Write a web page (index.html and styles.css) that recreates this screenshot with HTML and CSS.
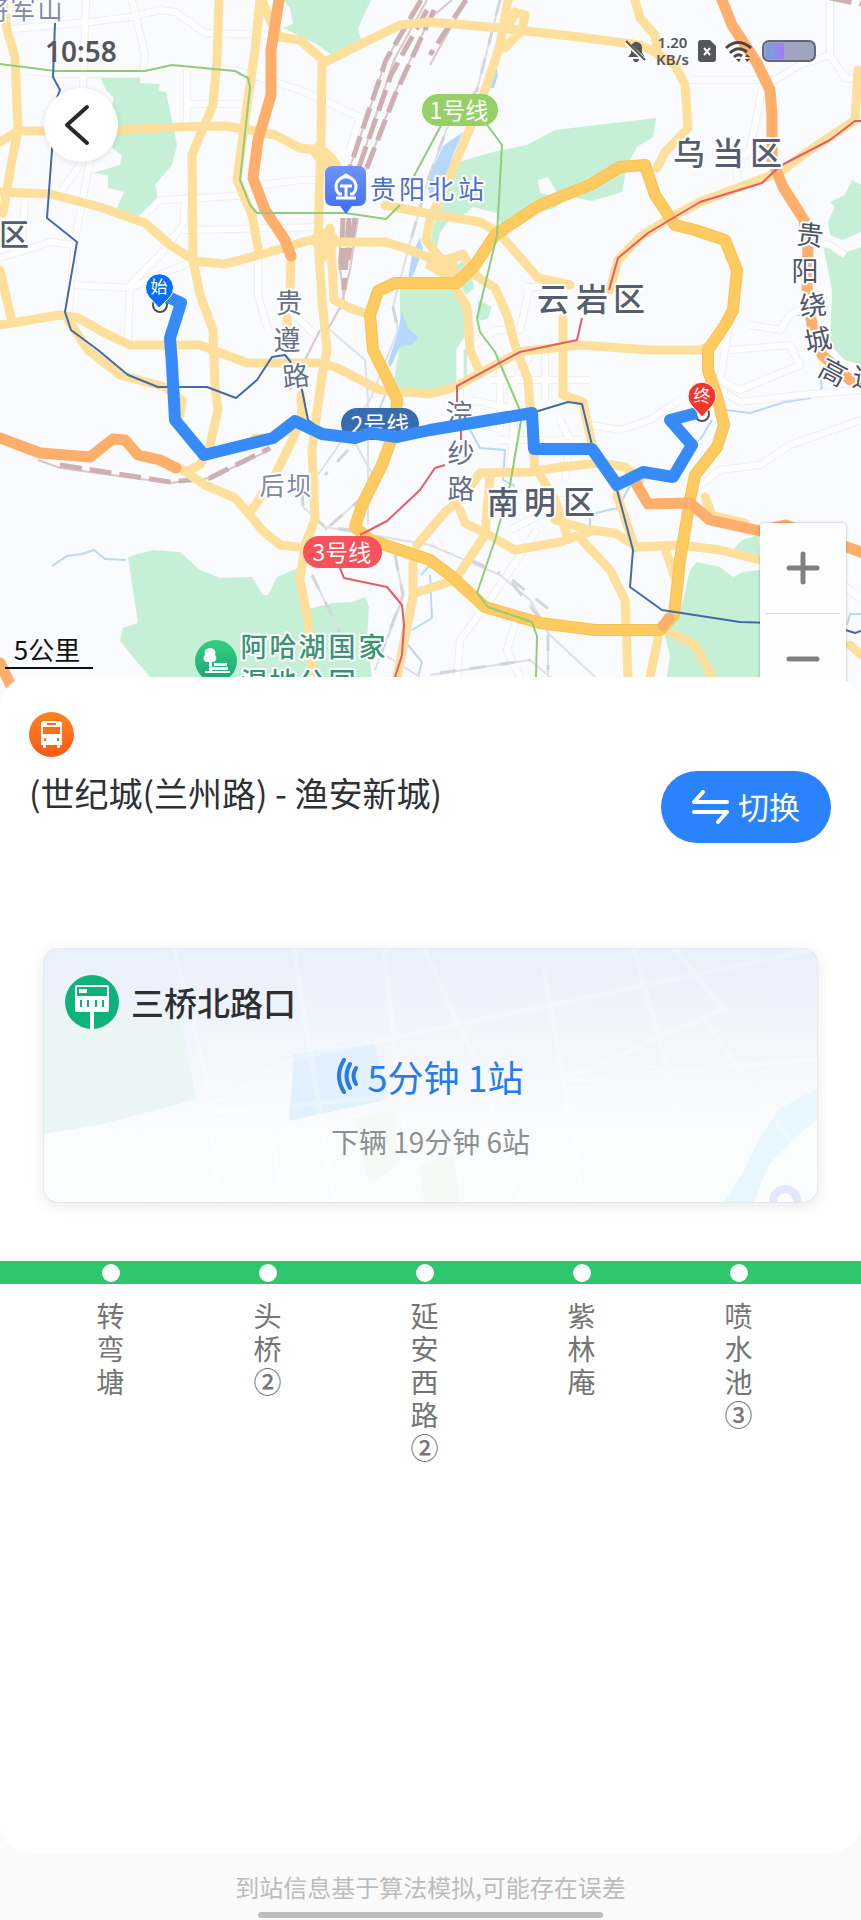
FILE: index.html
```html
<!DOCTYPE html>
<html lang="zh-CN">
<head>
<meta charset="utf-8">
<meta name="viewport" content="width=device-width, initial-scale=1">
<title>公交线路</title>
<link rel="stylesheet" href="styles.css">
</head>
<body>
<section class="map" aria-label="线路地图">
  <svg class="map-canvas" viewBox="0 0 861 700" preserveAspectRatio="xMidYMin slice">
    <defs>
      <linearGradient id="stationFill" x1="0" y1="0" x2="0" y2="1"><stop offset="0" stop-color="#6f93fb"/><stop offset="1" stop-color="#3d6df0"/></linearGradient>
      <linearGradient id="parkFill" x1="0" y1="0" x2="0" y2="1"><stop offset="0" stop-color="#35d07f"/><stop offset="1" stop-color="#17a676"/></linearGradient>
    </defs>

    <g class="park">
      <path d="M283 0H371L358 28 361 40 347 52 333 56 318 45 300 36 283 28 293 24 290 8Z"/>
      <path d="M100 77H140V83L160 84 158 91 166 92 174 130 177 145 172 165 155 185 158 199 145 215 135 217 117 208 124 192 108 188V175L93 173 120 165 122 155 112 148 118 130 110 110 114 98 106 90Z"/>
      <path d="M458 162L493 152 527 145 555 130 656 118 653 137 637 147 627 165 622 192 592 201 570 197 555 208 530 215 500 224 497 213 473 207 466 213 447 223 440 233 436 250 431 240 434 224Z"/>
      <path d="M400 288L455 285 467 310V375L457 390 430 393 405 393 393 385 400 345Z"/>
      <path d="M451 268L462 262 472 275 474 288 466 295ZM478 300L492 307 488 318 478 322Z"/>
      <path d="M861 185L852 180 845 195 830 202 835 207 828 222 830 235 842 240 861 232Z"/>
      <path d="M823 245L847 252 861 247V365L845 360 830 345 832 290Z"/>
      <path d="M128 557L152 550 180 552 200 570 220 578 252 577 263 595 268 595 277 577 300 567 303 610 333 603 353 602 365 597 369 607 367 640 372 677H150L127 650 120 640 123 628 138 623 133 590Z"/>
      <path d="M758 535L742 540 730 553 760 564ZM697 562L720 567 733 577 743 572 760 570V677H667L670 655 665 637 680 613 687 583 690 570Z"/>
    </g>
    <path d="M538 180L548 177 560 198 540 193Z" fill="#fafbff"/>
    <path class="lake" d="M443 146L463 132 453 155 447 177 430 197 427 182ZM495 60L498 75 494 88 490 88ZM420 237L423 250 414 273 407 285 412 255ZM402 312L408 328 418 337 413 344 400 347 390 368 388 362 397 335Z"/>
    <path class="river" d="M52 566L67 556 82 554 94 550 105 559 126 560M820 243L847 252M725 410L750 413 785 402 810 398 822 388 820 375M712 420L700 440M470 430L480 448 505 450 503 480 515 486M596 513L618 508 632 482M590 528V518M385 395L375 420M408 645L422 662 418 677M388 637L402 600M421 575L430 565M430 575L432 618 412 630M847 625L850 614H861M788 315H805"/>

    <g class="lane-edge">
      <path id="lanes" d="M0 30L90 22 130 17 160 10 175 12 205 33 270 35M86 0L83 88M132 0L145 55 143 70M20 70L60 74H143M187 70V125M187 104H242M235 70L300 90 360 117 350 150M90 160L75 240 68 320M62 190L80 165M0 258L50 242 75 245M25 200L22 240M140 220L160 200 255 195M185 200L183 225 160 255 130 285 128 340M75 285L130 288 195 260M183 230L320 227M262 185L300 180H318M258 250V295L268 330M285 305L320 340M690 80L775 80 800 65 830 55 830 0M830 55L845 78 861 80M762 90L750 150 735 165 738 180M530 285L520 330 495 330 475 345M525 287H545M480 320L460 350 460 400M590 425L620 430 650 420 680 400M730 320L720 380 740 390 800 365 790 345 730 350M720 390L740 402 800 395 861 390M861 420L790 445 760 465 720 470 700 485M750 325L780 330 790 315 800 310M500 350V430M530 355L510 390 515 440M545 350V400M490 380H590M500 440H580M515 415L510 470M470 400L520 410M560 420L570 440 565 480M590 490L510 530M590 500L540 500M537 530L490 600 460 640 457 677M520 608L507 650 520 677M435 540L450 565M838 580L861 600M800 240L830 245 845 255"/>
    </g>
    <use href="#lanes" class="lane-fill"/>

    <g class="rail">
      <path class="rail-bed" d="M500 0L477 90 447 128 428 180 410 243 400 280 393 307 398 330 370 400M318 475L370 400M330 330L365 360 368 400 368 525M355 443L373 475M365 495L325 530M302 490L303 507 325 527 430 545M395 555L403 595 375 670M312 575L340 632M385 655L420 677M430 545L500 575 530 600 548 630M530 605L550 635 595 677M548 630V677M430 675L530 660 550 677"/>
      <path class="rail-dash" d="M348 450L325 475M365 495L325 530M302 490L303 507 325 527 350 530M395 555L403 595 375 670M312 575L340 632M470 560L500 573M512 580L550 610M512 583L545 625M548 635V670M440 673L530 660M500 0L477 90 447 128 428 180 410 243M393 307L398 330"/>
      <path class="train-bed" d="M421 0L386 60 349 170M427 0L394 60 358 170M434 10L397 88 366 170M466 0L430 65M452 0L428 20M343 218L339 260 344 300 325 335M358 218L350 270 340 310M320 330L290 390M38 460L60 468 170 483 210 478 270 450"/>
      <path class="train-dash" d="M421 0L386 60 349 170M427 10L391 75 358 170M434 10L395 95 366 170M466 0L430 55M343 218L341 270M349 218L344 290M355 218L348 260M60 465L170 482 210 478 270 448M830 -2L861 4"/>
    </g>

    <g class="street">
      <path d="M3 0L7 30 15 57 18 130 12 160 3 213"/>
      <path d="M0 142L18 131 45 131 120 130 180 127 225 126 250 130 275 135 300 148 320 150"/>
      <path d="M0 192L50 194 100 207 145 223 170 245 195 261 225 264 270 252 310 240 340 242 385 242 405 248 445 264"/>
      <path d="M219 0L217 60 213 105 198 140 192 155 193 260 200 295 213 330 215 385 218 410 210 445 200 465 185 472"/>
      <path d="M260 0L255 50 245 120 237 180 252 215 258 248"/>
      <path d="M262 0L270 20 280 37 300 40 325 62 365 42 400 25 430 22 500 28 570 36 640 45 655 52 675 65 685 85 688 128 665 152 657 168"/>
      <path d="M322 60L321 140 318 240 322 300 327 350 322 375 312 450 315 520 305 545 300 580 308 620 313 677"/>
      <path d="M330 228L334 300 350 308 370 315M291 258L290 288M287 318V325M301 395L302 420 275 475 250 513M302 425L272 438 255 438"/>
      <path d="M180 468L205 485 235 498 250 515 262 530 280 545 308 548"/>
      <path d="M0 325L60 315 78 318 105 333 130 345 200 345 247 363 320 363 335 367 380 390 430 394 455 387 490 368 520 352"/>
      <path d="M68 320L88 350 120 375 165 387 182 400 180 415M0 270L12 322"/>
      <path d="M508 0L500 45 485 90 470 128 448 180 430 220 426 240 440 258M508 28L515 12 525 15 522 30 505 48"/>
      <path d="M385 205L430 214 480 222 498 232 538 278 570 285M563 318V395L583 402 592 445"/>
      <path d="M440 262L463 254 475 275 495 288 507 315 515 345 528 380 535 470"/>
      <path d="M455 287L467 307 470 350 478 368"/>
      <path d="M635 0L640 18 655 35 658 55M858 70L855 120"/>
      <path d="M610 290L618 260 640 237 670 218 700 202 740 187 780 172 810 150 855 120"/>
      <path d="M517 352L580 345 650 350 700 350 712 345"/>
      <path d="M417 545L445 512 460 500 480 473 530 472 560 467 600 463 625 467 640 480M460 510L465 523 485 533 515 550 560 542 595 530M540 475L555 500 567 535M490 475L485 535 455 580 415 593"/>
      <path d="M555 520L590 530 615 533 637 547 680 545 720 550 760 560"/>
      <path d="M413 560V597L397 677M582 540L610 570 625 600 628 677M665 548L675 578M617 495L635 548M665 630L695 645 712 677M658 638L650 677M705 497L712 515 745 523M850 645L861 655"/>
    </g>
    <path class="hub" d="M318 140L335 155 345 170 325 175 308 150ZM308 238L330 225 340 240 325 262ZM430 250L455 258 462 278 445 280 425 268Z"/>

    <path id="ring" class="arterial-edge" d="M457 283H395L378 291 370 315 373 350 388 380 397 400 395 430 382 465 362 505 355 527 370 540 430 560 450 575 485 607 540 623 595 630 660 630 674 615 680 560 690 500 695 475 717 447 724 425 718 400 708 370 708 350 725 325 733 310 737 270 725 240 695 230 675 225 655 195 645 165 620 167 590 185 540 205 495 235 475 265Z"/>
    <path class="arterial" d="M457 283H395L378 291 370 315 373 350 388 380 397 400 395 430 382 465 362 505 355 527 370 540 430 560 450 575 485 607 540 623 595 630 660 630 674 615 680 560 690 500 695 475 717 447 724 425 718 400 708 370 708 350 725 325 733 310 737 270 725 240 695 230 675 225 655 195 645 165 620 167 590 185 540 205 495 235 475 265Z"/>

    <path class="highway" d="M279 0L271 50V95L258 140 253 178 265 210 285 240 291 256M722 0L732 25 757 63 770 90 772 115V160L783 187 804 220 808 245 807 290 812 325 822 355 850 380M0 438L40 453 90 457 113 439 125 440 138 455 160 460 176 468M634 480L648 504 690 503 710 520 760 531 785 525 861 552M0 663L13 690M663 626L669 618"/>

    <path class="metro green" d="M0 64L55 71H145L172 65 235 71 248 78 250 87 240 180 250 205 257 213H345L386 219 400 205M413 178L445 118M485 122L502 145 497 235 477 318 480 332 495 352 522 415 510 485 495 540 477 593 488 607 532 622 537 636 536 677"/>
    <path class="metro blue" d="M55 23L53 77 60 90 52 110V150L47 218 77 242 65 312 71 330 98 350 128 375 158 387H207L236 398 257 380 272 357 285 355 290 361 302 390 308 420 315 425M535 412L568 402 582 404 592 445M617 490L633 550 630 587 662 610 740 622 830 625 855 633 861 631"/>
    <path class="metro red" d="M861 121H855L830 140 780 166 762 183 700 202 648 233 618 258 609 290M582 318L577 340 520 352 457 386V405M461 430V440M445 465L435 468 420 490 387 521 360 535M340 568L344 578 387 587 402 605 404 625 402 655 395 677"/>

    <g class="pill">
      <rect x="422" y="94" width="76" height="32" rx="16" fill="#96d066"/><text x="459" y="119">1号线</text>
      <rect x="303" y="536" width="79" height="32" rx="16" fill="#f7525c"/><text x="342" y="561">3号线</text>
      <rect x="341" y="408" width="78" height="32" rx="16" fill="#386cb1"/><text x="380" y="433">2号线</text>
    </g>

    <g class="road-name">
      <text x="289" y="313">贵</text><text x="287" y="350">遵</text><text x="296" y="386" transform="rotate(-6 296 376)">路</text>
      <text x="459" y="424">浣</text><text x="461" y="463">纱</text><text x="461" y="499">路</text>
    </g>

    <circle cx="160" cy="305" r="7" class="stop-ring"/>
    <circle cx="702" cy="414" r="7" class="stop-ring"/>
    <path class="route" d="M166 296L181 303 170 338 172 365 175 420 204 455 273 438 295 421 322 434 355 438 370 433 397 437 430 430 532 413 534 449H592L617 485 643 472 673 477 692 445 670 420 697 413"/>

    <g class="pin">
      <path d="M159 308L149 297A14 14 0 1 1 170 297Z" fill="#0a6ff5"/><text x="159" y="293">始</text>
      <path d="M702 417L692 406A14 14 0 1 1 712 406Z" fill="#f5352c"/><text x="702" y="402">终</text>
    </g>

    <g class="district">
      <text x="689 728 766" y="165">乌当区</text>
      <text x="553 592 629" y="311">云岩区</text>
      <text x="503 540 579" y="514">南明区</text>
      <text x="14" y="245" class="edge-name">区</text>
    </g>
    <g class="freeway-name">
      <text x="810" y="245" transform="rotate(6 810 235)">贵</text><text x="805" y="281">阳</text><text x="813" y="315" transform="rotate(-6 813 305)">绕</text><text x="818" y="350" transform="rotate(-12 818 340)">城</text><text x="833" y="382" transform="rotate(28 833 372)">高</text><text x="866" y="388" transform="rotate(8 866 378)">速</text>
    </g>
    <g class="place">
      <text x="-4 23 50" y="19">将军山</text>
      <text x="272 299" y="495">后坝</text>
    </g>
    <g class="station-name"><text x="383 412 441 471" y="199">贵阳北站</text></g>
    <path d="M333 166H358Q366 166 366 174V198Q366 206 358 206H352L346 214 340 206H333Q325 206 325 198V174Q325 166 333 166Z" fill="url(#stationFill)"/>
    <path d="M342 194H339A10 10 0 1 1 353 194H350M340 186H352M346 186V197M336 198H356M343 177L346 175 349 177" class="station-mark"/>
    <g class="park-name">
      <text x="254 283 312 342 372" y="657">阿哈湖国家</text>
      <text x="254 283 312 342" y="692">湿地公园</text>
    </g>
    <circle cx="216" cy="661" r="21" fill="url(#parkFill)"/>
    <path d="M210 648A5 5 0 0 1 215 655 4 4 0 0 1 213 662H206A4 4 0 0 1 205 655 5 5 0 0 1 210 648ZM209 660H212V671H209ZM214 663H227V666H214ZM212 667H228V670H212ZM205 671H230V673H205Z" fill="#fff"/>
  </svg>

  <header class="status-bar">
    <time class="clock">10:58</time>
    <div class="status-icons">
      <svg width="22" height="24" viewBox="0 0 22 24" aria-hidden="true"><path d="M3 18L6 14V9A6 6 0 0 1 10 3 2 2 0 0 1 12 3 6 6 0 0 1 17 9V14L20 18ZM8 20H14A3 3 0 0 1 8 20Z" fill="#55565a"/><path d="M0 3L20 21" stroke="#fff8ea" stroke-width="4"/><path d="M1 2L20 21" stroke="#55565a" stroke-width="2"/></svg>
      <span class="net-speed"><b>1.20</b><b>KB/s</b></span>
      <svg width="18" height="22" viewBox="0 0 18 22" aria-hidden="true"><path d="M3 0H12L18 6V19Q18 22 15 22H3Q0 22 0 19V3Q0 0 3 0Z" fill="#55565a"/><path d="M6 8L12 15M12 8L6 15" stroke="#fff" stroke-width="2"/></svg>
      <svg width="28" height="22" viewBox="0 0 28 22" fill="none" stroke="#51463f" stroke-width="3" aria-hidden="true"><path d="M1 8Q13-3 26 8M5 13Q13 5 22 12M9 17Q13 13 17 16"/><path d="M11 19H16L14 22ZM22 14L25 17H20ZM20 19H25L22 22Z" fill="#51463f" stroke="none"/></svg>
      <svg width="54" height="22" viewBox="0 0 54 22" aria-hidden="true"><rect x="1" y="1" width="52" height="20" rx="6" fill="#9fa4bf" stroke="#62667f" stroke-width="2"/><path d="M7 3H12V19H7Q4 19 4 16V6Q4 3 7 3Z" fill="#7c9bdc"/><path d="M12 3H17V19H12Z" fill="#8e8ee6"/><path d="M17 3H22V19H17Z" fill="#a47df0"/></svg>
    </div>
  </header>

  <button class="back" type="button" aria-label="返回"><svg width="26" height="42" viewBox="0 0 26 42" aria-hidden="true"><path d="M23 3L3 21 23 39" fill="none" stroke="#292929" stroke-width="4" stroke-linecap="round" stroke-linejoin="round"/></svg></button>

  <div class="zoom">
    <button type="button" aria-label="放大"><svg width="34" height="34" viewBox="0 0 34 34" aria-hidden="true"><path d="M3 17H31M17 3V31"/></svg></button>
    <button type="button" aria-label="缩小"><svg width="34" height="34" viewBox="0 0 34 34" aria-hidden="true"><path d="M3 17H31"/></svg></button>
  </div>
  <div class="scale">5公里</div>
</section>

<main class="sheet">
  <svg class="bus" width="45" height="45" viewBox="0 0 45 45" aria-hidden="true">
    <defs><linearGradient id="busFill" x1="0" y1="0" x2="0" y2="1"><stop offset="0" stop-color="#ff8420"/><stop offset="1" stop-color="#fb5a18"/></linearGradient></defs>
    <circle cx="22.500" cy="22.500" r="22.500" fill="url(#busFill)"/>
    <path d="M15 9H30Q33 9 33 12V33H31V35Q31 36 30 36H29Q28 36 28 35V33H17V35Q17 36 16 36H15Q14 36 14 35V33H12V12Q12 9 15 9Z" fill="#fff"/>
    <path d="M18 11H27V13H18ZM14 15H31V22H14ZM15 26H17V29H15ZM28 26H30V29H28Z" fill="#fe6d1b"/>
  </svg>
  <div class="route-head">
    <h1>(世纪城(兰州路) - 渔安新城)</h1>
    <button class="switch" type="button">
      <svg width="38" height="34" viewBox="0 0 38 34" fill="none" stroke="#fff" stroke-width="4" stroke-linecap="round" stroke-linejoin="round" aria-hidden="true"><path d="M11 2L2 12H35M2 22H35L26 32"/></svg>
      <span>切换</span>
    </button>
  </div>

  <section class="card">
    <svg class="card-map" viewBox="0 0 773 253" preserveAspectRatio="xMidYMid slice" aria-hidden="true">
      <path d="M0 60H135L152 150 60 175 0 185Z" fill="#ebf6f4"/>
      <path d="M250 105L330 95 345 150 245 172Z" fill="#e2f1fd"/>
      <path d="M310 170L350 160 355 215 325 235ZM375 215L410 205 415 253H380Z" fill="#f5faf6"/>
      <path d="M773 140L735 160 715 190 700 222 680 253H710L725 215 750 190 773 170Z" fill="#e8f6fd"/>
      <path d="M0 230L150 165 250 110 773 0M130 0L160 120 175 253M250 0L290 253M340 0L360 180 420 253M380 0L440 130 475 253M500 20L540 253M590 0L640 180M660 70L773 230M150 165L773 110M60 175L110 253M500 140L680 60 630 0M230 185L235 253" fill="none" stroke="#fff" stroke-opacity=".25" stroke-width="5"/>
      <circle cx="741" cy="252" r="12" fill="none" stroke="#e0e9f9" stroke-width="8"/>
    </svg>
    <div class="station">
      <svg width="54" height="54" viewBox="0 0 54 54" aria-hidden="true"><circle cx="27" cy="27" r="27" fill="#0fb278"/><path d="M12 10H42Q44 10 44 12V35Q44 37 42 37H29V54H25V37H12Q10 37 10 35V12Q10 10 12 10Z" fill="#fff"/><path d="M12 12H42V21H12ZM15 25H17V32H15ZM22 25H24V32H22ZM30 25H32V32H30ZM37 25H39V32H37Z" fill="#0fb278"/><path d="M14 14H22V18H14Z" fill="#fff"/></svg>
      <h2>三桥北路口</h2>
    </div>
    <p class="next-bus"><svg width="22" height="36" viewBox="0 0 22 36" fill="none" stroke="#277af0" stroke-width="4" stroke-linecap="round" aria-hidden="true"><path d="M7 2Q-3 18 7 34M13 6Q6 18 13 30M19 10Q14 18 19 26"/></svg><span>5分钟 1站</span></p>
    <p class="later-bus">下辆 19分钟 6站</p>
  </section>

  <ol class="stops">
    <li><i></i><span>转弯塘</span></li>
    <li><i></i><span>头桥<b>②</b></span></li>
    <li><i></i><span>延安西路<b>②</b></span></li>
    <li><i></i><span>紫林庵</span></li>
    <li><i></i><span>喷水池<b>③</b></span></li>
  </ol>
</main>

<footer class="foot">
  <p>到站信息基于算法模拟,可能存在误差</p>
  <div class="home-bar"></div>
</footer>
</body>
</html>
```
FILE: styles.css
```css
* { box-sizing: border-box; }

body {
  margin: 0;
  min-height: 100vh;
  display: flex;
  flex-direction: column;
  background: #fafafa;
  color: #2f3033;
  font-family: "Noto Sans CJK SC", sans-serif;
}

h1, h2, p, ol { margin: 0; padding: 0; font-weight: 400; }
button { border: 0; padding: 0; font: inherit; cursor: pointer; }

/* map */
.map { position: relative; overflow: hidden; background: #fafbff; }
.map-canvas { display: block; width: 100%; height: 700px; }
.map-canvas text { text-anchor: middle; paint-order: stroke; stroke-linejoin: round; }
.park { fill: #c5f0d5; }
.lake { fill: #b5d8ff; }
.river { fill: none; stroke: #b9d8fa; stroke-width: 2; }
.lane-edge { fill: none; stroke: #eeeff3; stroke-width: 8; stroke-linejoin: round; }
.lane-fill { fill: none; stroke: #fff; stroke-width: 6; stroke-linejoin: round; }
.rail { fill: none; }
.rail-bed { stroke: #dfe0e6; stroke-width: 2; }
.rail-dash { stroke: #d3d4dc; stroke-width: 3; stroke-dasharray: 16 14; }
.train-bed { stroke: #dcc6c8; stroke-width: 2; }
.train-dash { stroke: #cdb0b1; stroke-width: 5; stroke-dasharray: 22 8; }
.street { fill: none; stroke: #fedf9c; stroke-width: 9; stroke-linejoin: round; stroke-linecap: round; }
.hub { fill: #fedf9c; }
.arterial { fill: none; stroke: #ffcb60; stroke-width: 10; stroke-linejoin: round; }
.arterial-edge { fill: none; stroke: #fbc152; stroke-width: 12; stroke-linejoin: round; }
.highway { fill: none; stroke: #ffae6c; stroke-width: 11; stroke-linejoin: round; stroke-linecap: round; }
.metro { fill: none; stroke-width: 2; stroke-linejoin: round; }
.green { stroke: #90cd79; }
.blue { stroke: #416ca9; }
.red { stroke: #e75c68; }
.route { fill: none; stroke: #368bf8; stroke-width: 12; stroke-linejoin: round; }
.stop-ring { fill: #fff; stroke: #55504e; stroke-width: 2; }
.pill { fill: #fff; font-size: 23px; }
.pin { fill: #fff; font-size: 17px; }
.pin path { stroke: #fff; stroke-width: 1; }
.district { fill: #555d6f; font-size: 32px; font-weight: 500; stroke: #fff; stroke-width: 4; }
.edge-name { font-size: 30px; }
.road-name { fill: #667087; font-size: 27px; stroke: #fff; stroke-width: 4; }
.freeway-name { fill: #4d5568; font-size: 27px; stroke: #fff; stroke-width: 4; }
.place { fill: #8189a8; font-size: 25px; stroke: #fff; stroke-width: 4; }
.station-name { fill: #4c70ca; font-size: 26px; stroke: #fff; stroke-width: 4; }
.station-mark { fill: none; stroke: #fff; stroke-width: 3; }
.park-name { fill: #3a9473; font-size: 27px; font-weight: 500; stroke: #fff; stroke-width: 4; }

.status-bar {
  position: absolute;
  top: 32px;
  left: 45px;
  right: 45px;
  display: flex;
  align-items: center;
  justify-content: space-between;
  color: #55565a;
  font-family: "Noto Sans", sans-serif;
  font-weight: 600;
}
.clock { font-size: 28px; line-height: 38px; }
.status-icons { display: flex; align-items: center; gap: 9px; }
.net-speed { display: flex; flex-direction: column; font-size: 15px; line-height: 17px; text-align: center; }
.net-speed b { font-weight: 600; }

.back {
  position: absolute;
  top: 88px;
  left: 44px;
  width: 74px;
  height: 74px;
  padding-right: 8px;
  border-radius: 50%;
  background: #fff;
  box-shadow: 0 1px 6px rgba(0, 0, 0, .12);
  display: flex;
  align-items: center;
  justify-content: center;
}

.zoom {
  position: absolute;
  top: 523px;
  right: 15px;
  width: 86px;
  padding: 0 6px;
  background: #fefefe;
  border-radius: 3px;
  box-shadow: 0 0 3px rgba(0, 0, 0, .3);
}
.zoom button { display: flex; align-items: center; justify-content: center; width: 100%; height: 90px; background: none; }
.zoom button + button { border-top: 1px solid #dcdcdc; }
.zoom path { stroke: #808080; stroke-width: 5; stroke-linecap: round; }

.scale {
  position: absolute;
  left: 5px;
  top: 631px;
  width: 88px;
  padding-right: 4px;
  border-bottom: 2px solid #111;
  color: #111;
  font-size: 26px;
  line-height: 36px;
  text-align: center;
}

/* sheet */
.sheet {
  position: relative;
  flex: 1;
  margin-top: -23px;
  padding-top: 35px;
  border-radius: 30px;
  background: #fff;
}
.bus { display: block; margin-left: 29px; }
.route-head { display: flex; align-items: flex-start; justify-content: space-between; padding: 14px 30px 0 29px; }
h1 { font-size: 34px; line-height: 44px; }
.switch {
  display: flex;
  align-items: center;
  justify-content: center;
  gap: 8px;
  width: 170px;
  height: 72px;
  border-radius: 36px;
  background: #2a83fd;
  color: #fff;
  font-size: 31px;
  line-height: 44px;
}
.switch span { padding-bottom: 2px; }

.card {
  position: relative;
  height: 253px;
  margin: 106px 44px 0;
  padding: 26px 21px 0;
  overflow: hidden;
  border-radius: 14px;
  background: linear-gradient(#e8f0fb, #f5f8fd 50%, #fbfcfd 75%);
  box-shadow: 0 3px 16px rgba(0, 0, 0, .1), 0 0 1px rgba(0, 0, 0, .4);
}
.card-map { position: absolute; inset: 0; width: 100%; height: 100%; }
.station { position: relative; display: flex; align-items: center; gap: 12px; }
h2 { font-size: 33px; font-weight: 500; line-height: 48px; }
.next-bus {
  position: relative;
  display: flex;
  align-items: center;
  justify-content: center;
  gap: 8px;
  margin-top: 20px;
  color: #277af0;
  font-size: 36px;
  line-height: 54px;
}
.later-bus { position: relative; margin-top: 18px; color: #8e9092; font-size: 28px; line-height: 40px; text-align: center; }

.stops {
  display: flex;
  margin-top: 59px;
  padding-left: 32px;
  list-style: none;
  background: linear-gradient(#2fc76e, #2fc76e) top / 100% 23px no-repeat;
}
.stops li { flex: 0 0 157px; display: flex; flex-direction: column; align-items: center; padding-top: 3px; }
.stops i { width: 18px; height: 18px; border-radius: 50%; background: #fff; }
.stops span { width: 28px; margin-top: 17px; color: #757575; font-size: 28px; line-height: 33px; word-break: break-all; }
.stops b { font-weight: 500; }

/* footer */
.foot { height: 67px; display: flex; flex-direction: column; align-items: center; justify-content: space-between; padding: 16px 0 2px; }
.foot p { color: #bcbcbc; font-size: 24px; line-height: 36px; }
.home-bar { width: 40%; height: 6px; border-radius: 3px; background: #bdbdbd; }
```
